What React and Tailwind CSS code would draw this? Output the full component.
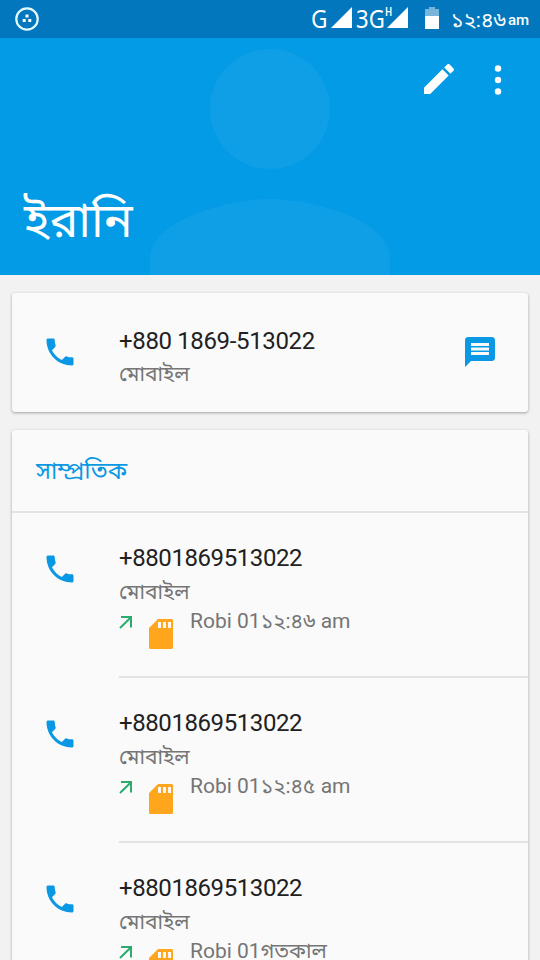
const calls = [
  { id: 1, number: '+8801869513022', type: 'মোবাইল', detail: 'Robi 01', time: '১২:৪৬ am' },
  { id: 2, number: '+8801869513022', type: 'মোবাইল', detail: 'Robi 01', time: '১২:৪৫ am' },
  { id: 3, number: '+8801869513022', type: 'মোবাইল', detail: 'Robi 01', time: 'গতকাল' },
];

const PhoneIcon = () => (
  <svg className="size-9 shrink-0 fill-[#0a98e4]" viewBox="0 0 24 24">
    <path d="M6.62 10.79c1.44 2.83 3.76 5.14 6.59 6.59l2.2-2.2c.27-.27.67-.36 1.02-.24 1.12.37 2.33.57 3.57.57.55 0 1 .45 1 1V20c0 .55-.45 1-1 1-9.39 0-17-7.61-17-17 0-.55.45-1 1-1h3.5c.55 0 1 .45 1 1 0 1.25.2 2.45.57 3.57.11.35.03.74-.25 1.02l-2.2 2.2z" />
  </svg>
);

const MessageIcon = () => (
  <svg className="size-9 shrink-0 fill-[#0a98e4]" viewBox="0 0 24 24">
    <path d="M20 2H4c-1.1 0-1.99.9-1.99 2L2 22l4-4h14c1.1 0 2-.9 2-2V4c0-1.1-.9-2-2-2zM6 9h12v2H6V9zm12 5H6v-2h12v2zm0-6H6V6h12v2z" />
  </svg>
);

const SdCardIcon = () => (
  <svg className="size-9 shrink-0 fill-[#ffa61c]" viewBox="0 0 24 24">
    <path d="M19 2h-9L4 8v13c0 .55.45 1 1 1h14c.55 0 1-.45 1-1V3c0-.55-.45-1-1-1zm-7 6h-2V4h2v4zm3.3 0h-2V4h2v4zm3.4 0h-2V4h2v4z" />
  </svg>
);

const OutgoingIcon = () => (
  <svg className="h-[13px] w-[14px] shrink-0" viewBox="0 0 14 13" fill="none" stroke="#2bab6d" strokeWidth="2">
    <path d="M2 1h10v10.5M12 1.2L1 12" />
  </svg>
);

const SignalIcon = () => (
  <svg className="h-[21px] w-[21px] shrink-0 fill-white" viewBox="0 0 21 21">
    <path d="M21 0v21H0z" />
  </svg>
);

const StatusBar = () => (
  <div className="flex h-[38px] items-start bg-[#0277bd] text-white">
    <svg className="ml-[15px] mt-[7px] size-6" viewBox="0 0 24 24">
      <circle cx="12" cy="12" r="10.7" fill="none" stroke="#e3fbff" strokeWidth="2.2" />
      <path d="M10.5 7.5h3v3h-3zM7.7 12h3v3h-3zM13.3 12h3v3h-3z" fill="#fff" />
    </svg>
    <div className="ml-auto flex items-start pr-3">
      <span className="mt-[6px] w-5 origin-left scale-x-[0.87] font-['Noto_Sans'] text-[26px] leading-6">G</span>
      <div className="mt-[7px]"><SignalIcon /></div>
      <span className="ml-1 mt-[6px] w-[29px] origin-left scale-x-[0.85] font-['Noto_Sans'] text-[26px] leading-6">3G</span>
      <span className="mt-[6px] w-[2px] origin-left scale-x-[0.8] font-['Noto_Sans'] text-[12px] font-semibold leading-3">H</span>
      <div className="mt-[7px]"><SignalIcon /></div>
      <svg className="ml-[17px] mt-[7px] h-[22px] w-[14px]" viewBox="0 0 14 22">
        <path d="M4 0h6v2h4v7H0V2h4z" fill="#78b5dc" />
        <path d="M0 9h14v13H0z" fill="#fff" />
      </svg>
      <span className="ml-3 mt-2 w-[56px] whitespace-nowrap text-[21px] leading-6">১২:৪৬</span>
      <span className="mt-2 w-[21px] pl-px text-[15px] font-medium leading-6">am</span>
    </div>
  </div>
);

const Header = () => (
  <div className="relative flex h-[237px] flex-col overflow-hidden bg-[#039be5] text-white">
    <svg className="absolute -top-[49px] left-[90px] size-[360px] fill-[#0f9fe6]" viewBox="0 0 24 24">
      <circle cx="12" cy="8" r="4" />
      <path d="M12 14c-2.67 0-8 1.34-8 4v2h16v-2c0-2.66-5.33-4-8-4z" />
    </svg>
    <div className="relative flex justify-end pt-[21px]">
      <svg className="size-10 fill-white" viewBox="0 0 24 24">
        <path d="M3 17.25V21h3.75L17.81 9.94l-3.75-3.75L3 17.25zM20.71 7.04c.39-.39.39-1.02 0-1.41l-2.34-2.34c-.39-.39-1.02-.39-1.41 0l-1.83 1.83 3.75 3.75 1.83-1.83z" />
      </svg>
      <svg className="ml-9 mr-[39px] mt-[5px] h-[32px] w-[6px] overflow-visible fill-white" viewBox="0 0 6 32">
        <circle cx="3" cy="4.5" r="3.2" />
        <circle cx="3" cy="16" r="3.2" />
        <circle cx="3" cy="27.5" r="3.2" />
      </svg>
    </div>
    <h1 className="relative mt-[90px] pl-6 text-[48px] leading-[64px]">ইরানি</h1>
  </div>
);

const CallRow = ({ call, last }) => (
  <div className="flex h-[165px] pl-[30px]">
    <div className="mt-[38px]">
      <PhoneIcon />
    </div>
    <div className={last ? 'ml-[41px] flex-1' : 'ml-[41px] flex-1 border-b-2 border-[#e3e3e3]'}>
      <p className="mt-[31px] text-[24px] leading-7 tracking-[-0.42px] text-[#212121]">{call.number}</p>
      <p className="mt-[6px] text-[21px] leading-7 text-[#757575]">{call.type}</p>
      <div className="mt-[10px] flex items-start">
        <OutgoingIcon />
        <div className="ml-[10px]">
          <SdCardIcon />
        </div>
        <p className="-mt-[7px] ml-[11px] whitespace-nowrap text-[21px] leading-6 text-[#757575]">
          {call.detail}
          {call.time}
        </p>
      </div>
    </div>
  </div>
);

const App = () => (
  <div className="h-[960px] w-[540px] overflow-hidden bg-[#f2f2f2] font-[Roboto,'Noto_Sans_Bengali','Noto_Sans',sans-serif]">
    <StatusBar />
    <Header />

    <div className="mx-3 mt-[18px] flex h-[119px] rounded-[3px] bg-[#fafafa] pl-[30px] pr-[30px] shadow-[0_1px_3px_rgba(0,0,0,0.35)]">
      <div className="mt-[41px]">
        <PhoneIcon />
      </div>
      <div className="ml-[41px] flex-1">
        <p className="mt-[34px] text-[24px] leading-7 tracking-[-0.36px] text-[#212121]">+880 1869-513022</p>
        <p className="mt-[5px] text-[21px] leading-7 text-[#757575]">মোবাইল</p>
      </div>
      <div className="mt-[41px]">
        <MessageIcon />
      </div>
    </div>

    <div className="mx-3 mt-[18px] rounded-[3px] bg-[#fafafa] shadow-[0_1px_3px_rgba(0,0,0,0.35)]">
      <h2 className="flex h-[83px] items-center border-b-2 border-[#e3e3e3] pl-6 text-[24px] leading-8 text-[#0a98e4]">
        সাম্প্রতিক
      </h2>
      {calls.map((call, index) => (
        <CallRow key={call.id} call={call} last={index === calls.length - 1} />
      ))}
    </div>
  </div>
);

export default App;
